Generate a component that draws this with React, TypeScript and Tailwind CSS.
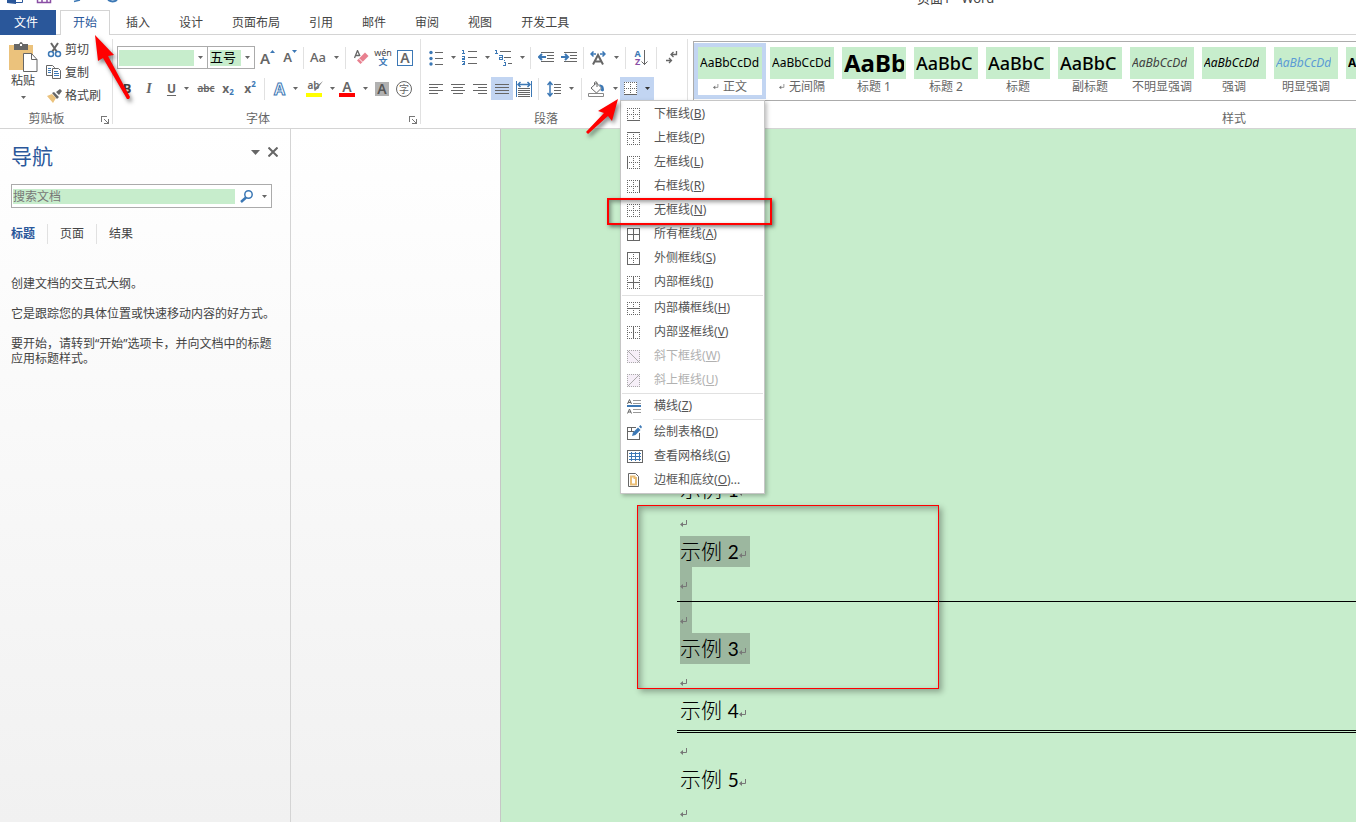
import type { ReactNode } from "react";
import clsx from "clsx";

const Caret = ({ className }: { className?: string }) => (
  <svg width="5" height="3" viewBox="0 0 5 3" className={clsx("shrink-0", className)} aria-hidden="true">
    <path d="M0 0h5L2.5 3z" fill="currentColor" />
  </svg>
);

const Sep = () => (
  <span className="flex h-[22px] w-[7px] shrink-0 justify-center">
    <span className="h-full w-px bg-[#e1e1e1]" />
  </span>
);

type ToolProps = { label: string; width: string; caret?: boolean; active?: boolean; children: ReactNode };

const Tool = ({ label, width, caret, active, children }: ToolProps) => (
  <button
    type="button"
    aria-label={label}
    className={clsx(
      "flex h-[23px] shrink-0 items-center justify-center text-[#666]",
      width,
      caret && "gap-2",
      active && "bg-[#c2d5f2]"
    )}
  >
    {children}
    {caret && <Caret className={active ? "text-[#333]" : undefined} />}
  </button>
);

const Launcher = ({ label }: { label: string }) => (
  <button type="button" aria-label={label} className="absolute right-1 bottom-1">
    <svg width="8" height="8" viewBox="0 0 8 8" fill="none" stroke="#777" shapeRendering="crispEdges">
      <path d="M.5 6V.5H6M3 3l4 4M7.5 3v4.5H3" />
    </svg>
  </button>
);

const Caption = ({ className, children }: { className?: string; children: ReactNode }) => (
  <div className={clsx("absolute inset-x-0 bottom-px text-center leading-4 text-[#666]", className)}>{children}</div>
);

/* ---------- paragraph icons ---------- */

const Lines = ({ rows }: { rows: [number, number][] }) => (
  <svg width="14" height="12" viewBox="0 0 14 12" stroke="#666" shapeRendering="crispEdges">
    {rows.map(([from, to], i) => (
      <path key={i} d={`M${from} ${i * 3 + 1.5}H${to}`} />
    ))}
  </svg>
);

const Bullets = () => (
  <svg width="14" height="16" viewBox="0 0 14 16">
    <g fill="#3c78b5">
      <circle cx="2" cy="2.5" r="1.7" />
      <circle cx="2" cy="8.5" r="1.7" />
      <circle cx="2" cy="14" r="1.7" />
    </g>
    <path d="M6 2.5h8M6 8.5h8M6 14.5h8" stroke="#666" shapeRendering="crispEdges" />
  </svg>
);

const Numbers = () => (
  <svg width="15" height="17" viewBox="0 0 15 17" fill="none" shapeRendering="crispEdges">
    <path d="M0 1.5h1.5V5M0 4.5h3M0 7.5h2.5v1.5H.5v1.5H3M0 12.5h2.5v3H0M1 14.5h2" stroke="#3c78b5" />
    <path d="M6 2.5h9M6 8.5h9M6 14.5h9" stroke="#666" />
  </svg>
);

const Multilevel = () => (
  <svg width="17" height="17" viewBox="0 0 17 17" fill="none" shapeRendering="crispEdges">
    <path d="M0 1.5h1.5V4M0 4.5h3M4 6.5h3v4H4.5v-2H7M9.5 11v1M9 13.5h1V16M8 16.5h3" stroke="#3c78b5" />
    <path d="M5 2.5h11M9 8.5h7M13 14.5h4" stroke="#666" />
  </svg>
);

const Indent = ({ out }: { out?: boolean }) => (
  <svg width="16" height="13" viewBox="0 0 16 13" fill="none">
    <path d="M3 1.5h13M9 4.5h7M9 7.5h7M3 10.5h13" stroke="#666" shapeRendering="crispEdges" />
    <path d={out ? "M8 6H2M4 3 1 6l3 3" : "M0 6h6M4 3l3 3-3 3"} stroke="#3c78b5" strokeWidth="2" />
  </svg>
);

const CharScale = () => (
  <svg width="16" height="14" viewBox="0 0 16 14" fill="none">
    <path d="M3 13.5 8 4l5 9.5M4.5 10.5h7" stroke="#666" strokeWidth="2" />
    <path d="M6 3H1M3.5.5 1 3l2.5 2.5M10 3h5M12.5.5 15 3l-2.5 2.5" stroke="#3c78b5" strokeWidth="1.5" />
  </svg>
);

const SortIcon = () => (
  <span className="flex items-center">
    <span className="flex flex-col text-[9px] leading-2 font-bold">
      <span className="text-[#3c78b5]">A</span>
      <span className="text-[#8a4fa5]">Z</span>
    </span>
    <svg width="7" height="16" viewBox="0 0 7 16" fill="none" stroke="#666">
      <path d="M3.5 0v15M.5 11.5l3 3 3-3" />
    </svg>
  </span>
);

const MarksIcon = () => (
  <svg width="12" height="14" viewBox="0 0 12 14" fill="none" stroke="#666">
    <path d="M10.5 0v3.5H5.5M7.5 1 5 3.5 7.5 6M0 9.5h5M3 7l2.5 2.5L3 12" strokeWidth="1.3" />
  </svg>
);

const Distribute = () => (
  <svg width="16" height="16" viewBox="0 0 16 16" fill="none">
    <path d="M.5 0v16M15.5 0v16" stroke="#3c78b5" shapeRendering="crispEdges" />
    <path d="M2 3.5h12M4.5 1 2 3.5 4.5 6M11.5 1 14 3.5 11.5 6" stroke="#3c78b5" strokeWidth="1.5" />
    <path d="M2 7.5h12M2 9.5h12M2 11.5h12M2 13.5h12M2 15.5h12" stroke="#666" shapeRendering="crispEdges" />
  </svg>
);

const LineSpacing = () => (
  <svg width="14" height="16" viewBox="0 0 14 16" fill="none">
    <path d="M3 1.5v13M.5 4 3 1l2.5 3M.5 12 3 15l2.5-3" stroke="#3c78b5" strokeWidth="1.5" />
    <path d="M7 3.5h7M7 6.5h7M7 9.5h7M7 12.5h7" stroke="#666" shapeRendering="crispEdges" />
  </svg>
);

const Bucket = () => (
  <svg width="17" height="16" viewBox="0 0 17 16" fill="none">
    <path d="M3 7 8.5 2l5 5-5 5zM6.500 4V1.500Q8 0 9 1.500V6" stroke="#666" />
    <path d="M11 3.500c4 0 5 2 5 6l-1.500 1-2-1 1-2.500z" fill="#3c78b5" />
    <path d="M.5 12.500h15v3H.5z" stroke="#888" fill="#fff" />
  </svg>
);

/* ---------- table border icons ---------- */

// sides drawn solid: t b l r outer edges, h v inner lines
const BorderIcon = ({ solid = "", slash }: { solid?: string; slash?: "down" | "up" }) => {
  const edges: Record<string, string> = {
    t: "M0 .5h13",
    b: "M0 12.5h13",
    l: "M.5 0v13",
    r: "M12.5 0v13",
    h: "M0 6.5h13",
    v: "M6.5 0v13",
  };
  const keys = slash ? ["t", "b", "l", "r"] : Object.keys(edges);
  return (
    <svg width="13" height="13" viewBox="0 0 13 13" fill="none" stroke={slash ? "#aaa" : "#666"} aria-hidden="true">
      <path d="M0 0h13v13H0z" fill={slash ? "#f6eff8" : "#fff"} stroke="none" />
      {keys.map((k) => (
        <path key={k} d={edges[k]} strokeDasharray={solid.includes(k) ? undefined : "1 1"} shapeRendering="crispEdges" />
      ))}
      {slash && <path d={slash === "down" ? "M1 1l11 11" : "M1 12 12 1"} />}
    </svg>
  );
};

const RuleIcon = () => (
  <svg width="15" height="15" viewBox="0 0 15 15" fill="none" aria-hidden="true">
    <path d="M.5 5 2.5.5 4.5 5M1 3.5h3M.5 14.5l2-4.5 2 4.5M1 13h3" stroke="#666" />
    <path d="M6 1.5h8M6 4.5h8M6 10.5h8M6 13.5h8" stroke="#999" shapeRendering="crispEdges" />
    <path d="M0 6h14v2H0z" fill="#3c78b5" />
  </svg>
);

const DrawTableIcon = () => (
  <svg width="15" height="15" viewBox="0 0 15 15" fill="none" aria-hidden="true">
    <path d="M9 2.5H.5v12h12V8M.5 6.5H7M4.5 3v4" stroke="#666" shapeRendering="crispEdges" />
    <path d="M5 11l1-3.5L11 2.5l2.5 2.5-5 5z" fill="#3c78b5" />
    <path d="M12 1.5 13.5 0 15 2l-1 1.5z" fill="#3c78b5" />
  </svg>
);

const GridlinesIcon = () => (
  <svg width="16" height="13" viewBox="0 0 16 13" fill="none" shapeRendering="crispEdges" aria-hidden="true">
    <path d="M2 3.5h12M2 6.5h12M2 9.5h12M4.5 2v9M8.500 2v9M12.500 2v9" stroke="#3c78b5" />
    <path d="M.5.5h15v12H.5z" stroke="#666" />
  </svg>
);

const PageBorderIcon = () => (
  <svg width="13" height="14" viewBox="0 0 13 14" fill="none" aria-hidden="true">
    <path d="M1.5.5h7l3 3v10h-10z" stroke="#666" />
    <path d="M4 3.5h3.5V5H9v6.5H4z" stroke="#e9bd76" strokeWidth="2" />
  </svg>
);

type Entry = { text: string; hotkey: string; more?: string; icon: ReactNode; disabled?: boolean };

const borderMenu: Entry[][] = [
  [
    { text: "下框线", hotkey: "B", icon: <BorderIcon solid="b" /> },
    { text: "上框线", hotkey: "P", icon: <BorderIcon solid="t" /> },
    { text: "左框线", hotkey: "L", icon: <BorderIcon solid="l" /> },
    { text: "右框线", hotkey: "R", icon: <BorderIcon solid="r" /> },
    { text: "无框线", hotkey: "N", icon: <BorderIcon /> },
    { text: "所有框线", hotkey: "A", icon: <BorderIcon solid="tblrhv" /> },
    { text: "外侧框线", hotkey: "S", icon: <BorderIcon solid="tblr" /> },
    { text: "内部框线", hotkey: "I", icon: <BorderIcon solid="hv" /> },
  ],
  [
    { text: "内部横框线", hotkey: "H", icon: <BorderIcon solid="h" /> },
    { text: "内部竖框线", hotkey: "V", icon: <BorderIcon solid="v" /> },
    { text: "斜下框线", hotkey: "W", icon: <BorderIcon slash="down" />, disabled: true },
    { text: "斜上框线", hotkey: "U", icon: <BorderIcon slash="up" />, disabled: true },
  ],
  [{ text: "横线", hotkey: "Z", icon: <RuleIcon /> }],
  [
    { text: "绘制表格", hotkey: "D", icon: <DrawTableIcon /> },
    { text: "查看网格线", hotkey: "G", icon: <GridlinesIcon /> },
    { text: "边框和底纹", hotkey: "O", more: "...", icon: <PageBorderIcon /> },
  ],
];

const BorderMenu = () => (
  <div
    role="menu"
    className="absolute top-[23px] left-0 z-20 w-[145px] border border-[#c6c6c6] bg-white py-px shadow-[2px_2px_4px_rgba(0,0,0,0.25)]"
  >
    {borderMenu.map((group, i) => (
      <div key={i}>
        {i > 0 && <div className={clsx("mt-px mr-px h-px bg-[#e1e1e1]", i === 3 ? "ml-8" : "ml-px")} />}
        {group.map((entry) => (
          <button
            key={entry.hotkey}
            type="button"
            role="menuitem"
            disabled={entry.disabled}
            className={clsx("flex h-6 w-full items-center pl-[6px] text-left", entry.disabled ? "text-[#b1b1b1]" : "text-[#555]")}
          >
            <span className="w-[27px] shrink-0">{entry.icon}</span>
            <span className="whitespace-nowrap">
              {entry.text}(<u className="underline-offset-1">{entry.hotkey}</u>){entry.more}
            </span>
          </button>
        ))}
      </div>
    ))}
    <div className="pointer-events-none absolute top-[97px] -left-[14px] h-[27px] w-[165px] border-2 border-[#f00] shadow-[2px_2px_4px_rgba(0,0,0,0.5),inset_2px_2px_4px_rgba(0,0,0,0.4)]" />
  </div>
);

/* ---------- ribbon groups ---------- */

const Clipboard = () => (
  <section className="relative w-[113px] shrink-0">
    <div className="flex pt-[3px]">
      <button type="button" className="flex w-[46px] flex-col items-center pt-1 text-[#444]">
        <svg width="29" height="31" viewBox="0 0 29 31" fill="none">
          <path d="M0 3h24v25H0z" fill="#ebc27c" />
          <path d="M5 2h5q2-4 4 0h5v6H5z" fill="#666" />
          <path d="M11 2h2v2h-2z" fill="#fff" />
          <path d="M14.5 11.5h8l5.5 6v12H14.5z" fill="#fff" stroke="#666" />
          <path d="M22.5 11.5v6H28" stroke="#666" />
        </svg>
        <span className="leading-4">粘贴</span>
        <Caret className="mt-[7px] text-[#666]" />
      </button>
      <div className="flex flex-col text-[#444]">
        <button type="button" className="flex h-[23px] items-center gap-[2px]">
          <svg width="17" height="16" viewBox="0 0 17 16" fill="none">
            <path d="M5 1l6 9M12 1 6 10" stroke="#666" strokeWidth="2" />
            <circle cx="5" cy="12" r="2.5" stroke="#3c78b5" strokeWidth="1.5" />
            <circle cx="12" cy="12" r="2.5" stroke="#3c78b5" strokeWidth="1.5" />
          </svg>
          剪切
        </button>
        <button type="button" className="flex h-[23px] items-center gap-[2px]">
          <svg width="17" height="15" viewBox="0 0 17 15">
            <g fill="#fff" stroke="#666">
              <path d="M.5.5h6l2 2v8h-8z" />
              <path d="M6.5 3.5h6l2 2v8h-8z" />
            </g>
            <path d="M2 3.5h3M2 5.5h3M2 7.5h3M8 6.5h4M8 8.5h5M8 10.5h5" stroke="#3c78b5" shapeRendering="crispEdges" />
          </svg>
          复制
        </button>
        <button type="button" className="flex h-[23px] items-center gap-[2px]">
          <svg width="17" height="14" viewBox="0 0 17 14">
            <path d="M1 7l5-2 4 4-3 5z" fill="#ebc27c" />
            <path d="M6 4l2-1 5 5-2 2zM10 3l4-3 2 2-3 4z" fill="#666" />
          </svg>
          格式刷
        </button>
      </div>
    </div>
    <Caption className="pr-5">剪贴板</Caption>
    <Launcher label="剪贴板选项" />
    <span className="absolute top-1 right-0 h-[85px] w-px bg-[#e1e1e1]" />
  </section>
);

const FontGroup = () => (
  <section className="relative w-[308px] shrink-0 pt-[11px] pl-1">
    <div className="flex h-[23px] items-center">
      <div className="flex h-[23px] w-[91px] items-center border border-[#ababab] pr-1 pl-px">
        <input aria-label="字体" className="mr-1 h-4 min-w-0 flex-1 bg-[#c7edcc]" />
        <Caret className="text-[#666]" />
      </div>
      <div className="flex h-[23px] w-[47px] items-center border border-l-0 border-[#ababab] pr-1 pl-[2px]">
        <input aria-label="字号" defaultValue="五号" className="mr-1 h-4 min-w-0 flex-1 bg-[#c7edcc] text-[13px] text-black" />
        <Caret className="text-[#666]" />
      </div>
      <Tool label="增大字号" width="w-[25px]">
        <span className="text-[15px] font-semibold">A</span>
        <Caret className="mb-3 rotate-180 text-[#3c78b5]" />
      </Tool>
      <Tool label="减小字号" width="w-5">
        <span className="text-[13px] font-semibold">A</span>
        <Caret className="mb-3 text-[#3c78b5]" />
      </Tool>
      <Sep />
      <Tool label="更改大小写" width="w-[35px]" caret>
        <span className="text-[13px] font-medium">Aa</span>
      </Tool>
      <Sep />
      <Tool label="清除格式" width="w-6">
        <svg width="15" height="15" viewBox="0 0 15 15" fill="none">
          <path d="M.5 8 3.5.5 6 6M1.500 5.500h4" stroke="#666" strokeWidth="1.3" />
          <path d="M3 10.500 11 2.500l3.500 3.500-8 8z" fill="#e8808f" />
          <path d="M5 8.500l3.500 3.500" stroke="#fff" />
        </svg>
      </Tool>
      <Tool label="拼音指南" width="w-5">
        <span className="flex flex-col items-center">
          <span className="text-[9px] leading-2 text-[#444]">wén</span>
          <span className="text-[9px] leading-[9px] font-bold text-[#3c78b5]">文</span>
        </span>
      </Tool>
      <Tool label="字符边框" width="w-6">
        <span className="flex size-4 items-center justify-center border border-[#3c78b5] text-sm leading-4 font-semibold">A</span>
      </Tool>
    </div>
    <div className="mt-2 flex h-[23px] items-center">
      <Tool label="加粗" width="w-5">
        <b className="text-[13px] text-[#444]">B</b>
      </Tool>
      <Tool label="倾斜" width="w-6">
        <i className="font-['Liberation_Serif'] text-sm font-bold">I</i>
      </Tool>
      <Tool label="下划线" width="w-[34px]" caret>
        <u className="font-bold underline-offset-2">U</u>
      </Tool>
      <Tool label="删除线" width="w-[22px]">
        <s className="text-[10px] font-semibold">abc</s>
      </Tool>
      <Tool label="下标" width="w-[22px]">
        <b>x</b>
        <b className="mt-2 text-[8px] text-[#3c78b5]">2</b>
      </Tool>
      <Tool label="上标" width="w-[22px]">
        <b>x</b>
        <b className="mb-2 text-[8px] text-[#3c78b5]">2</b>
      </Tool>
      <Sep />
      <Tool label="文本效果" width="w-9" caret>
        <span className="text-base font-bold text-white [-webkit-text-stroke:1px_#3c78b5]">A</span>
      </Tool>
      <Tool label="突出显示" width="w-8" caret>
        <span className="relative flex h-4 w-4 shrink-0 justify-center border-b-4 border-[#ff0] text-[10px] leading-2 font-semibold">
          ab
          <svg width="10" height="11" viewBox="0 0 10 11" className="absolute top-0 -right-px">
            <path d="M10 0 4 8l-2 2-1-1 2-3z" fill="#777" />
          </svg>
        </span>
      </Tool>
      <Tool label="字体颜色" width="w-[35px]" caret>
        <span className="flex h-4 w-4 justify-center border-b-4 border-[#f00] text-sm leading-3 font-semibold">A</span>
      </Tool>
      <Tool label="字符底纹" width="w-[22px]">
        <span className="flex h-[14px] w-[14px] items-center justify-center bg-[#b1b1b1] text-sm leading-3 font-semibold text-[#555]">A</span>
      </Tool>
      <Tool label="带圈字符" width="w-[22px]">
        <span className="flex size-4 items-center justify-center rounded-full border border-[#666] text-[10px] leading-3">字</span>
      </Tool>
    </div>
    <Caption className="pr-[18px]">字体</Caption>
    <Launcher label="字体选项" />
    <span className="absolute top-1 right-0 h-[85px] w-px bg-[#e1e1e1]" />
  </section>
);

const ParagraphGroup = () => (
  <section className="relative w-[267px] shrink-0 pt-[11px] pl-1">
    <div className="flex h-[23px] items-center">
      <Tool label="项目符号" width="w-[34px]" caret>
        <Bullets />
      </Tool>
      <Tool label="编号" width="w-[34px]" caret>
        <Numbers />
      </Tool>
      <Tool label="多级列表" width="w-[34px]" caret>
        <Multilevel />
      </Tool>
      <Sep />
      <Tool label="减少缩进量" width="w-[23px]">
        <Indent out />
      </Tool>
      <Tool label="增加缩进量" width="w-[23px]">
        <Indent />
      </Tool>
      <Sep />
      <Tool label="中文版式" width="w-[35px]" caret>
        <CharScale />
      </Tool>
      <Sep />
      <Tool label="排序" width="w-6">
        <SortIcon />
      </Tool>
      <Sep />
      <Tool label="显示编辑标记" width="w-6">
        <MarksIcon />
      </Tool>
    </div>
    <div className="mt-2 flex h-[23px] items-center">
      <Tool label="左对齐" width="w-[22px]">
        <Lines rows={[[0, 14], [0, 9], [0, 14], [0, 9]]} />
      </Tool>
      <Tool label="居中" width="w-[22px]">
        <Lines rows={[[0, 14], [2, 12], [0, 14], [2, 12]]} />
      </Tool>
      <Tool label="右对齐" width="w-[22px]">
        <Lines rows={[[0, 14], [5, 14], [0, 14], [5, 14]]} />
      </Tool>
      <Tool label="两端对齐" width="w-[22px]" active>
        <Lines rows={[[0, 14], [0, 14], [0, 14], [0, 14]]} />
      </Tool>
      <Tool label="分散对齐" width="w-[22px]">
        <Distribute />
      </Tool>
      <Sep />
      <Tool label="行和段落间距" width="w-9" caret>
        <LineSpacing />
      </Tool>
      <Sep />
      <Tool label="底纹" width="w-[35px]" caret>
        <Bucket />
      </Tool>
      <div className="relative">
        <Tool label="边框" width="w-[34px]" caret active>
          <BorderIcon solid="b" />
        </Tool>
        <BorderMenu />
      </div>
    </div>
    <Caption className="pr-[17px]">段落</Caption>
    <span className="absolute top-1 right-0 h-[85px] w-px bg-[#e1e1e1]" />
  </section>
);

const styles = [
  { name: "正文", sample: "AaBbCcDd", look: "text-xs", mark: true, selected: true },
  { name: "无间隔", sample: "AaBbCcDd", look: "text-xs", mark: true },
  { name: "标题 1", sample: "AaBb", look: "text-2xl font-bold" },
  { name: "标题 2", sample: "AaBbC", look: "text-lg font-medium" },
  { name: "标题", sample: "AaBbC", look: "text-lg font-medium" },
  { name: "副标题", sample: "AaBbC", look: "text-lg font-medium" },
  { name: "不明显强调", sample: "AaBbCcDd", look: "text-xs italic text-[#404040]" },
  { name: "强调", sample: "AaBbCcDd", look: "text-xs italic" },
  { name: "明显强调", sample: "AaBbCcDd", look: "text-xs italic text-[#5b9bd5]" },
  { name: "要点", sample: "AaBbCcDd", look: "text-xs font-bold" },
];

const StylesGroup = () => (
  <section className="min-w-0 flex-1 overflow-hidden">
    <div className="relative h-full w-[1092px] pt-[6px] pl-[5px]">
      <div className="flex h-[60px] border border-[#ababab] pt-px">
        {styles.map((s) => (
          <button
            key={s.name}
            type="button"
            className={clsx(
              "flex h-[56px] w-[72px] shrink-0 flex-col items-center border-4",
              s.selected ? "border-[#c2d5f2]" : "border-transparent"
            )}
          >
            <span className="flex h-8 w-16 shrink-0 items-center overflow-hidden bg-[#c7edcc] px-[2px] text-black">
              <span className={clsx("overflow-hidden leading-8 whitespace-nowrap", s.look)}>{s.sample}</span>
            </span>
            <span className="flex items-center gap-1 leading-4 whitespace-nowrap text-[#666]">
              {s.mark && <ReturnMark small />}
              {s.name}
            </span>
          </button>
        ))}
      </div>
      <Caption>样式</Caption>
    </div>
  </section>
);

/* ---------- navigation pane ---------- */

const NavPane = () => (
  <aside className="w-[291px] shrink-0 border-r border-[#d4d4d4] pr-4 pl-[11px] text-[#444]">
    <div className="flex h-[55px] items-start pt-[11px]">
      <h2 className="flex-1 text-[21px] leading-8 text-[#2a579a]">导航</h2>
      <div className="flex h-6 items-center gap-2 text-[#666]">
        <button type="button" aria-label="窗格选项">
          <svg width="9" height="5" viewBox="0 0 9 5">
            <path d="M0 0h9L4.5 5z" fill="currentColor" />
          </svg>
        </button>
        <button type="button" aria-label="关闭" className="-mr-1">
          <svg width="10" height="10" viewBox="0 0 10 10" stroke="currentColor" strokeWidth="2">
            <path d="M.5.5l9 9M9.5.5l-9 9" />
          </svg>
        </button>
      </div>
    </div>
    <div className="flex h-6 w-[261px] items-center border border-[#ababab] bg-white pr-1 pl-px">
      <input
        aria-label="搜索文档"
        placeholder="搜索文档"
        className="h-[15px] w-[223px] bg-[#c7edcc] leading-[15px] placeholder:text-[#777]"
      />
      <button type="button" aria-label="搜索" className="ml-[5px]">
        <svg width="14" height="13" viewBox="0 0 14 13" fill="none" stroke="#3c78b5">
          <circle cx="8.5" cy="4.5" r="3.7" strokeWidth="1.5" />
          <path d="M6 7.5 1 12" strokeWidth="2.5" />
        </svg>
      </button>
      <Caret className="ml-2 text-[#666]" />
    </div>
    <div className="mt-4 flex h-5 items-center divide-x divide-[#e1e1e1]">
      <button type="button" className="h-full pr-3 font-bold text-[#2a579a]">标题</button>
      <button type="button" className="h-full px-3">页面</button>
      <button type="button" className="h-full px-3">结果</button>
    </div>
    <div className="mt-8 space-y-[15px] leading-[15px]">
      <p>创建文档的交互式大纲。</p>
      <p className="whitespace-nowrap">它是跟踪您的具体位置或快速移动内容的好方式。</p>
      <p className="whitespace-nowrap">
        要开始，请转到“开始”选项卡，并向文档中的标题
        <br />
        应用标题样式。
      </p>
    </div>
  </aside>
);

/* ---------- document ---------- */

const ReturnMark = ({ small }: { small?: boolean }) => (
  <svg width={small ? 6 : 8} height={small ? 6 : 8} viewBox="0 0 8 8" fill="none" stroke="#777" aria-hidden="true">
    <path d="M6.5 0v4.5H1" />
    <path d="M0 4.5 3 2v5z" fill="#777" stroke="none" />
  </svg>
);

const Line = ({ n, selected, className }: { n?: number; selected?: boolean; className?: string }) => (
  <div className={clsx("flex pl-[3px]", className)}>
    <p className={clsx("flex h-[31px] items-center text-black", n ? "w-[70px]" : "w-3", selected && "bg-[#9cb79f]")}>
      {n && (
        <span className="pb-[2px] font-[Lato,'Noto_Sans_CJK_SC',sans-serif] text-[21px] leading-[29px] font-light whitespace-nowrap">
          示例 <span className="text-[19px] font-normal">{n}</span>
        </span>
      )}
      <span className="mt-[6px]">
        <ReturnMark />
      </span>
    </p>
  </div>
);

const Document = () => (
  <main className="min-w-0 flex-1 overflow-hidden border-l border-[#c6c6c6] bg-[#c7edcc] pt-[345px] pl-[176px]">
    <Line n={1} />
    <div className="relative">
      <Line />
      <Line n={2} selected />
      <div className="flex h-[34px] pl-[3px]">
        <p className="flex h-full w-3 bg-[#9cb79f] pt-[15px]">
          <ReturnMark />
        </p>
      </div>
      <hr className="border-black" />
      <Line selected />
      <Line n={3} selected />
      <Line />
      <div className="pointer-events-none absolute top-0 -left-10 h-[184px] w-[302px] border border-[#f00] shadow-[3px_3px_6px_rgba(0,0,0,0.3),inset_3px_3px_6px_rgba(0,0,0,0.3)]" />
    </div>
    <Line n={4} className="pb-1" />
    <hr className="border-t-3 border-double border-black" />
    <Line />
    <Line n={5} />
    <Line />
  </main>
);

/* ---------- pointers ---------- */

const Pointers = () => (
  <>
    <svg width="48" height="76" viewBox="0 0 48 76" className="pointer-events-none absolute top-[30px] left-[90px] z-30 drop-shadow-[2px_3px_2px_rgba(0,0,0,0.5)]">
      <path d="M5 5 24 25 18 26 40 67 39 69 37 69 13 28 8 31z" fill="#f00" />
    </svg>
    <svg width="44" height="46" viewBox="0 0 44 46" className="pointer-events-none absolute top-[95px] left-[580px] z-30 drop-shadow-[2px_3px_2px_rgba(0,0,0,0.5)]">
      <path d="M38 4 32 26 28 21 8 39 6 37 24 18 18 16z" fill="#f00" />
    </svg>
  </>
);

const tabs = ["开始", "插入", "设计", "页面布局", "引用", "邮件", "审阅", "视图", "开发工具"];

export default function App() {
  return (
    <div className="relative flex h-screen flex-col overflow-hidden bg-white font-['Noto_Sans','Noto_Sans_CJK_SC',sans-serif] text-xs text-[#444]">
      <header className="flex h-[10px] shrink-0 overflow-hidden">
        <svg width="130" height="5" viewBox="0 0 130 5" fill="none" className="shrink-0" aria-hidden="true">
          <path d="M7 0h9v4l-9-1z" fill="#2a579a" />
          <path d="M16 2.5h6.5V0" stroke="#2a579a" />
          <path d="M37.5 0v2.5h13V0M42 0v2M47 0v2" stroke="#8a4fa5" strokeWidth="1.5" />
          <path d="M80 0 74 1.5" stroke="#3c78b5" strokeWidth="1.5" />
          <path d="M108 0q5 3 9 0" stroke="#3c78b5" strokeWidth="2" />
        </svg>
        <h1 className="-mt-[10px] ml-[787px] text-[13px] leading-4 whitespace-nowrap">页面1 - Word</h1>
      </header>
      <nav className="flex h-[25px] shrink-0 border-b border-[#d4d4d4]">
        <button type="button" className="h-[25px] w-14 bg-[#2a579a] pr-1 text-white">文件</button>
        <div className="ml-1 flex gap-[3px]">
          {tabs.map((tab, i) => (
            <button
              key={tab}
              type="button"
              className={clsx(
                "h-[25px] border border-b-0 px-3 pb-px whitespace-nowrap",
                i === 0 ? "border-[#d4d4d4] bg-white text-[#2a579a]" : "border-transparent"
              )}
            >
              {tab}
            </button>
          ))}
        </div>
      </nav>
      <div className="flex h-[94px] shrink-0 border-b border-[#d4d4d4]">
        <Clipboard />
        <FontGroup />
        <ParagraphGroup />
        <StylesGroup />
      </div>
      <div className="flex min-h-0 flex-1 bg-linear-to-b from-white to-[#f1f1f1]">
        <NavPane />
        <div className="w-[209px] shrink-0" />
        <Document />
      </div>
      <Pointers />
    </div>
  );
}
